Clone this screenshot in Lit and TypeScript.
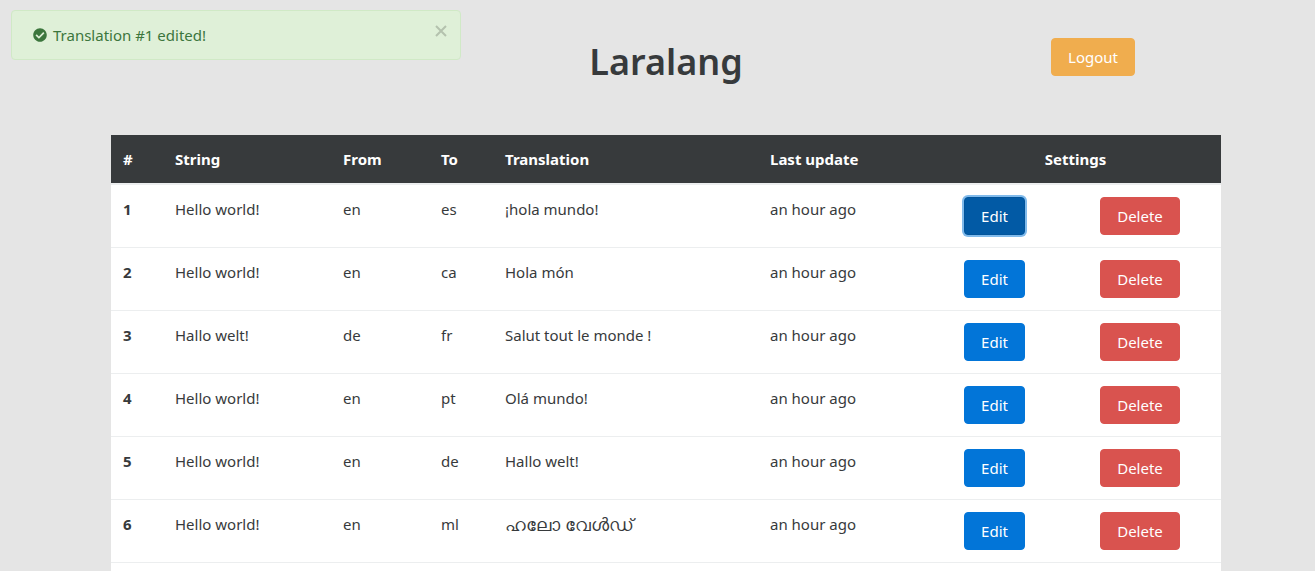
import { LitElement, html, css } from "lit";
import { customElement } from "lit/decorators.js";

const rows = [
  ["1", "Hello world!", "en", "es", "¡hola mundo!"],
  ["2", "Hello world!", "en", "ca", "Hola món"],
  ["3", "Hallo welt!", "de", "fr", "Salut tout le monde !"],
  ["4", "Hello world!", "en", "pt", "Olá mundo!"],
  ["5", "Hello world!", "en", "de", "Hallo welt!"],
  ["6", "Hello world!", "en", "ml", "ഹലോ വേൾഡ്"],
];

@customElement("app-root")
export class AppRoot extends LitElement {
  static styles = css`
    :host {
      display: block;
      position: relative;
      height: 571px;
      overflow: hidden;
      background: #e5e5e5;
      color: #373a3c;
      font-family: "Noto Sans", sans-serif;
      font-size: 15px;
      line-height: 24px;
    }
    .page {
      width: 1110px;
      margin-left: 111px;
    }
    .alert {
      position: absolute;
      left: 11px;
      top: 10px;
      width: 450px;
      height: 50px;
      box-sizing: border-box;
      display: flex;
      align-items: center;
      gap: 6px;
      padding: 0 21px;
      background: #dff0d8;
      border: 1px solid #d0e9c6;
      border-radius: 4px;
      color: #3c763d;
    }
    .alert svg { width: 14px; height: 14px; fill: #3c763d; flex: none; }
    .close {
      position: absolute;
      right: 12px;
      top: 13px;
      width: 14px;
      height: 14px;
    }
    .close svg { display: block; width: 14px; height: 14px; fill: none; stroke: #b4c2ae; stroke-width: 2; }
    .top {
      height: 135px;
      display: grid;
      grid-template-columns: 1fr auto 1fr;
      align-items: start;
    }
    h1 {
      grid-column: 2;
      margin: 37px 0 0;
      font-size: 36px;
      line-height: 50px;
      font-weight: 600;
    }
    .btn {
      display: inline-block;
      box-sizing: border-box;
      height: 38px;
      padding: 0;
      border: 1px solid transparent;
      border-radius: 4px;
      color: #fff;
      font: inherit;
      line-height: 36px;
      text-align: center;
    }
    .logout {
      grid-column: 3;
      justify-self: end;
      margin: 38px 86px 0 0;
      width: 84px;
      background: #f0ad4e;
      border-color: #f0ad4e;
    }
    .edit { width: 61px; background: #0275d8; border-color: #0275d8; }
    .edit.focus {
      background: #025aa5;
      border-color: #01549b;
      box-shadow: 0 0 0 2px rgba(2, 117, 216, 0.5);
    }
    .delete { width: 80px; background: #d9534f; border-color: #d9534f; }
    table {
      width: 1110px;
      table-layout: fixed;
      border-collapse: collapse;
      background: #fff;
    }
    th, td {
      padding: 12px;
      text-align: left;
      vertical-align: top;
    }
    th {
      height: 49px;
      box-sizing: border-box;
      background: #373a3c;
      color: #fff;
      font-weight: 700;
      border-bottom: 2px solid #eceeef;
    }
    td {
      height: 63px;
      box-sizing: border-box;
      border-bottom: 1px solid #eceeef;
    }
    td:first-child { font-weight: 700; }
    .center { text-align: center; }
    .ml { font-size: 18px; line-height: 24px; }
  `;

  render() {
    return html`
      <div class="alert">
        <svg viewBox="0 0 512 512"><path d="M504 256c0 136.967-111.033 248-248 248S8 392.967 8 256 119.033 8 256 8s248 111.033 248 248zM227.314 387.314l184-184c6.248-6.248 6.248-16.379 0-22.627l-22.627-22.627c-6.248-6.249-16.379-6.249-22.628 0L216 308.118l-70.059-70.059c-6.248-6.248-16.379-6.248-22.628 0l-22.627 22.627c-6.248 6.248-6.248 16.379 0 22.627l104 104c6.249 6.249 16.379 6.249 22.628 0z"/></svg>
        <span>Translation #1 edited!</span>
        <div class="close"><svg viewBox="0 0 14 14"><path d="M2 2l10 10M12 2L2 12"/></svg></div>
      </div>
      <div class="page">
        <div class="top">
          <h1>Laralang</h1>
          <button class="btn logout">Logout</button>
        </div>
        <table>
          <colgroup>
            <col style="width:52px" /><col style="width:168px" /><col style="width:98px" />
            <col style="width:64px" /><col style="width:265px" /><col style="width:172px" />
            <col style="width:129px" /><col style="width:162px" />
          </colgroup>
          <thead>
            <tr>
              <th>#</th><th>String</th><th>From</th><th>To</th><th>Translation</th><th>Last update</th>
              <th class="center" colspan="2">Settings</th>
            </tr>
          </thead>
          <tbody>
            ${rows.map(
              (r, i) => html`
                <tr>
                  <td>${r[0]}</td><td>${r[1]}</td><td>${r[2]}</td><td>${r[3]}</td>
                  <td class=${r[3] === "ml" ? "ml" : ""}>${r[4]}</td>
                  <td>an hour ago</td>
                  <td class="center"><button class="btn edit ${i === 0 ? "focus" : ""}">Edit</button></td>
                  <td class="center"><button class="btn delete">Delete</button></td>
                </tr>
              `
            )}
            <tr><td colspan="8"></td></tr>
          </tbody>
        </table>
      </div>
    `;
  }
}
